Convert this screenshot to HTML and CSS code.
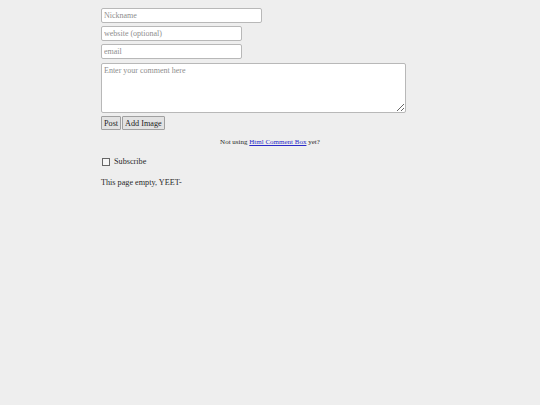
FILE: index.html
```html
<!DOCTYPE html>
<html lang="en">
<head>
  <meta charset="UTF-8" />
  <meta name="viewport" content="width=device-width, initial-scale=1.0"/>
  <title>Comments</title>
  <link rel="stylesheet" href="styles.css">
</head>
<body>
  <div class="hcb-wrapper">
    <form class="hcb-form">
      <input type="text" class="field nick" placeholder="Nickname">
      <input type="text" class="field short" placeholder="website (optional)">
      <input type="text" class="field short" placeholder="email">
      <textarea class="comment" placeholder="Enter your comment here"></textarea>
      <div class="buttons">
        <button type="button">Post</button>
        <button type="button">Add Image</button>
      </div>
      <p class="credit">Not using <a href="#">Html Comment Box</a> yet?</p>
      <label class="subscribe"><input type="checkbox"> Subscribe</label>
    </form>
    <p class="empty">This page empty, YEET-</p>
  </div>
</body>
</html>
```

FILE: styles.css
```css
body {
  margin: 0;
  background: #eeeeee;
  font-family: 'Liberation Serif', serif;
  color: #2a2a2a;
}
.hcb-wrapper {
  width: 338px;
  margin: 0 auto;
  padding-top: 8px;
}
.hcb-form {
  display: flex;
  flex-direction: column;
  align-items: flex-start;
}
.field {
  box-sizing: border-box;
  height: 15px;
  padding: 0 2px;
  margin: 0 0 3px;
  font-family: 'Liberation Serif', serif;
  font-size: 8px;
  border: 1px solid #b8b8b8;
  border-radius: 2px;
  background: #fff;
}
.nick {
  width: 161px;
}
.short {
  width: 141px;
}
.comment {
  box-sizing: border-box;
  width: 305px;
  height: 50px;
  margin: 1px 0 3px;
  padding: 2px;
  font-family: 'Liberation Serif', serif;
  font-size: 8px;
  border: 1px solid #b8b8b8;
  border-radius: 2px;
  resize: vertical;
}
::placeholder {
  color: #8e8e8e;
}
.buttons {
  display: flex;
  gap: 1px;
}
.buttons button {
  box-sizing: border-box;
  height: 14px;
  padding: 0 2px;
  font-family: 'Liberation Serif', serif;
  font-size: 8.2px;
  color: #222;
  background: #e2e2e2;
  border: 1px solid #a0a0a0;
  border-radius: 1px;
}
.credit {
  align-self: stretch;
  text-align: center;
  font-size: 7px;
  line-height: 8px;
  margin: 8px 0 0;
}
.credit a {
  color: #2a2ac8;
}
.subscribe {
  display: flex;
  align-items: center;
  gap: 4px;
  font-size: 8.2px;
  line-height: 10px;
  margin-top: 11px;
}
.subscribe input {
  appearance: none;
  box-sizing: border-box;
  margin: 0 0 0 1px;
  width: 8px;
  height: 8px;
  border: 1px solid #666;
  border-radius: 0;
  background: #f6f6f6;
}
.empty {
  font-size: 8.2px;
  line-height: 10px;
  margin: 11px 0 0;
}
```
